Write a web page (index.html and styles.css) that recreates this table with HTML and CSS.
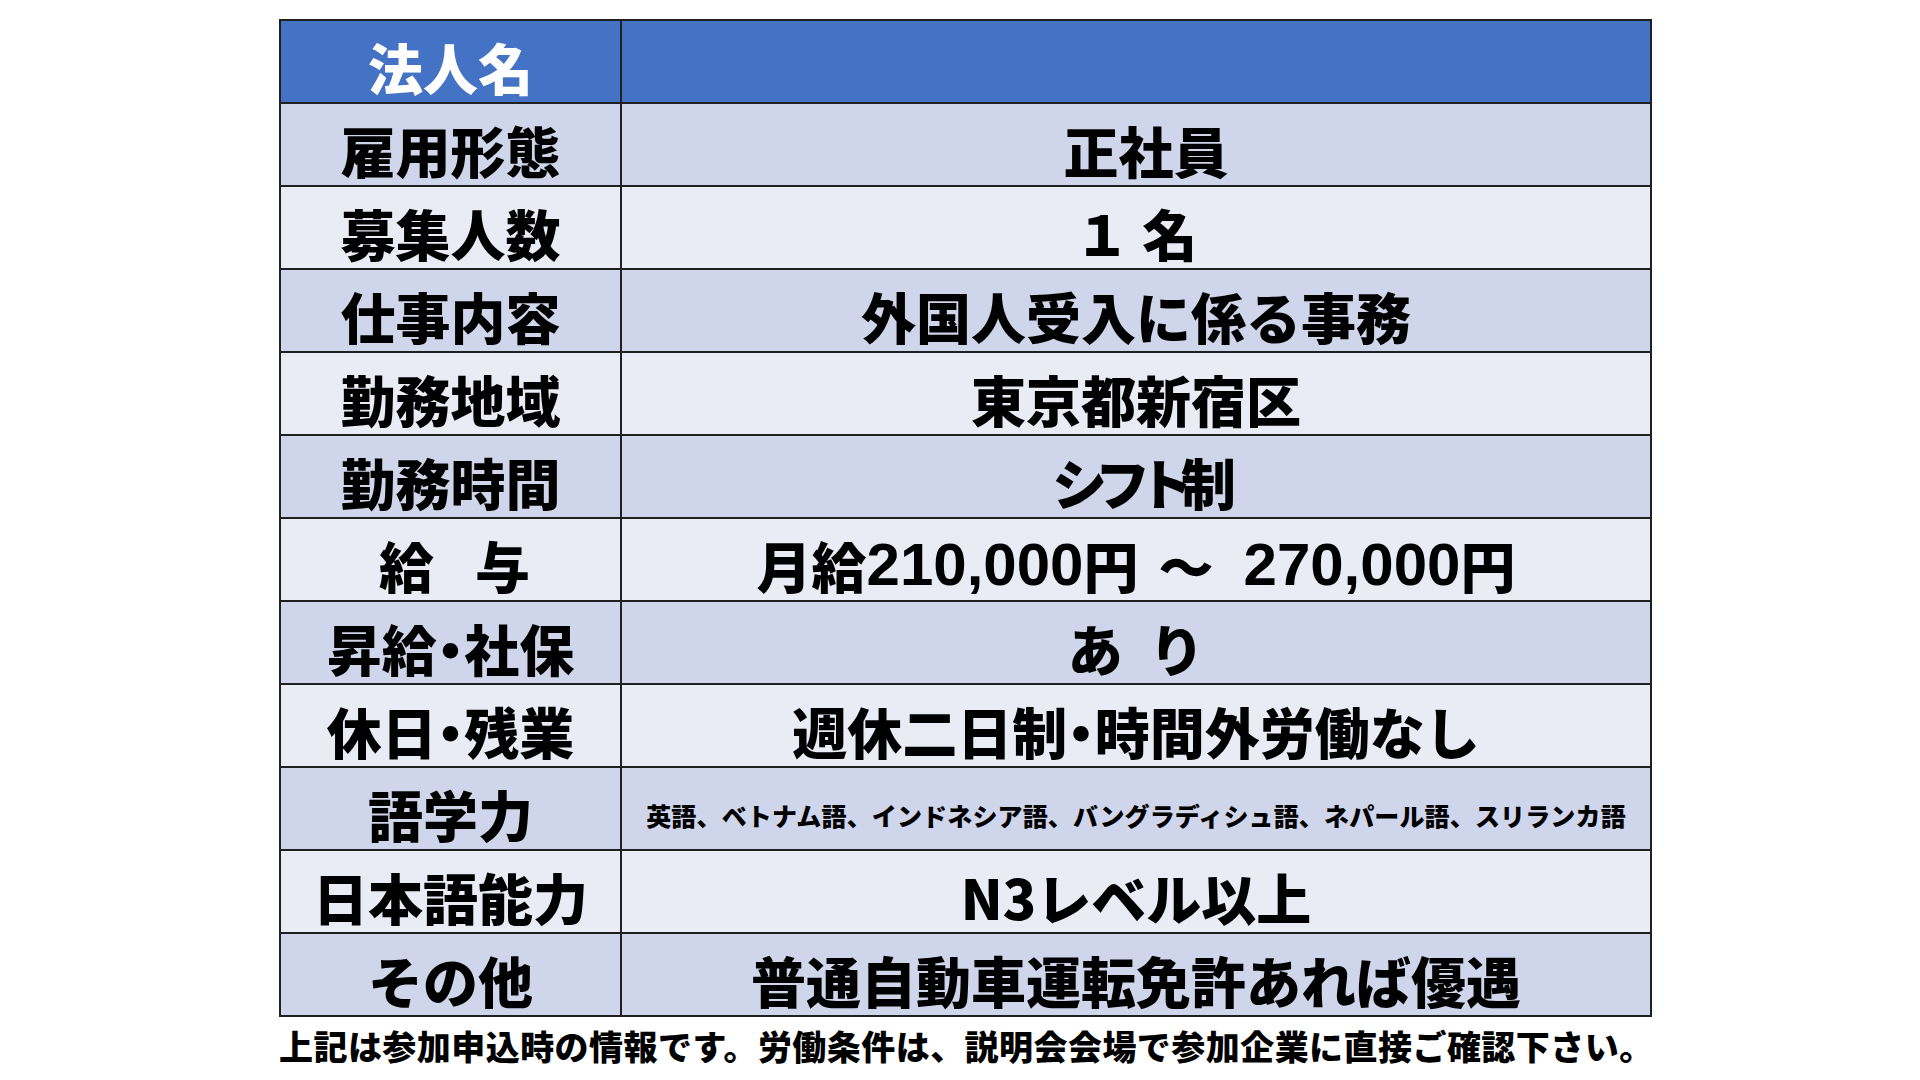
FILE: index.html
```html
<!DOCTYPE html>
<html lang="ja">
<head>
<meta charset="utf-8">
<title>求人情報</title>
<link rel="stylesheet" href="styles.css">
</head>
<body>
<div class="sheet">
  <div class="grid">
    <div class="cell head key">法人名</div>
    <div class="cell head val"></div>

    <div class="cell odd key">雇用形態</div>
    <div class="cell odd val nudge">正社員</div>

    <div class="cell even key">募集人数</div>
    <div class="cell even val">１ 名</div>

    <div class="cell odd key">仕事内容</div>
    <div class="cell odd val">外国人受入に係る事務</div>

    <div class="cell even key">勤務地域</div>
    <div class="cell even val">東京都新宿区</div>

    <div class="cell odd key">勤務時間</div>
    <div class="cell odd val tight">シフト制</div>

    <div class="cell even key squeeze">給　与</div>
    <div class="cell even val money">月給<span class="num">210,000</span>円 <span class="tilde">～</span> <span class="num">270,000</span>円</div>

    <div class="cell odd key">昇給<span class="dot">・</span>社保</div>
    <div class="cell odd val wide">あ り</div>

    <div class="cell even key">休日<span class="dot">・</span>残業</div>
    <div class="cell even val">週休二日制<span class="dot">・</span>時間外労働なし</div>

    <div class="cell odd key">語学力</div>
    <div class="cell odd val small">英語、ベトナム語、インドネシア語、バングラディシュ語、ネパール語、スリランカ語</div>

    <div class="cell even key">日本語能力</div>
    <div class="cell even val">N3レベル以上</div>

    <div class="cell odd key">その他</div>
    <div class="cell odd val">普通自動車運転免許あれば優遇</div>
  </div>
  <p class="note">上記は参加申込時の情報です。労働条件は、説明会会場で参加企業に直接ご確認下さい。</p>
</div>
</body>
</html>
```

FILE: styles.css
```css
html, body {
  margin: 0;
  padding: 0;
  background: #ffffff;
}

body {
  width: 1920px;
  height: 1080px;
  overflow: hidden;
  font-family: "Noto Sans CJK JP", "Noto Sans", sans-serif;
  color: #000;
}

.sheet {
  padding: 19px 0 0 279px;
}

.grid {
  display: grid;
  grid-template-columns: 339px 1028px;
  grid-auto-rows: 81px;
  gap: 2px;
  padding: 2px;
  background: #202020;
  width: max-content;
}

.cell {
  display: flex;
  align-items: center;
  justify-content: center;
  box-sizing: border-box;
  padding-top: 10px;
  font-size: 55px;
  font-weight: 900;
  line-height: 1;
  white-space: nowrap;
}

.head {
  background: #4472c4;
  color: #ffffff;
}

.odd {
  background: #cfd5ea;
}

.even {
  background: #e9ebf5;
}

.nudge {
  padding-left: 20px;
}

.tight {
  letter-spacing: -12px;
  padding-left: 4px;
}

.squeeze {
  letter-spacing: -7px;
  padding-left: 1px;
}

.wide {
  word-spacing: 14px;
}

.dot {
  font-feature-settings: "halt";
}

.money {
  word-spacing: 4px;
}

.tilde {
  margin: 0 30px 0 20px;
}

.num {
  font-family: "Liberation Sans", "Noto Sans", sans-serif;
  font-weight: 700;
  font-size: 60px;
  letter-spacing: 0;
}

.small {
  font-size: 25px;
  padding-top: 14px;
  letter-spacing: 0.15px;
}

.note {
  margin: 9px 0 0;
  font-size: 34px;
  font-weight: 900;
  line-height: 1.2;
  letter-spacing: 0.45px;
  white-space: nowrap;
}
```
